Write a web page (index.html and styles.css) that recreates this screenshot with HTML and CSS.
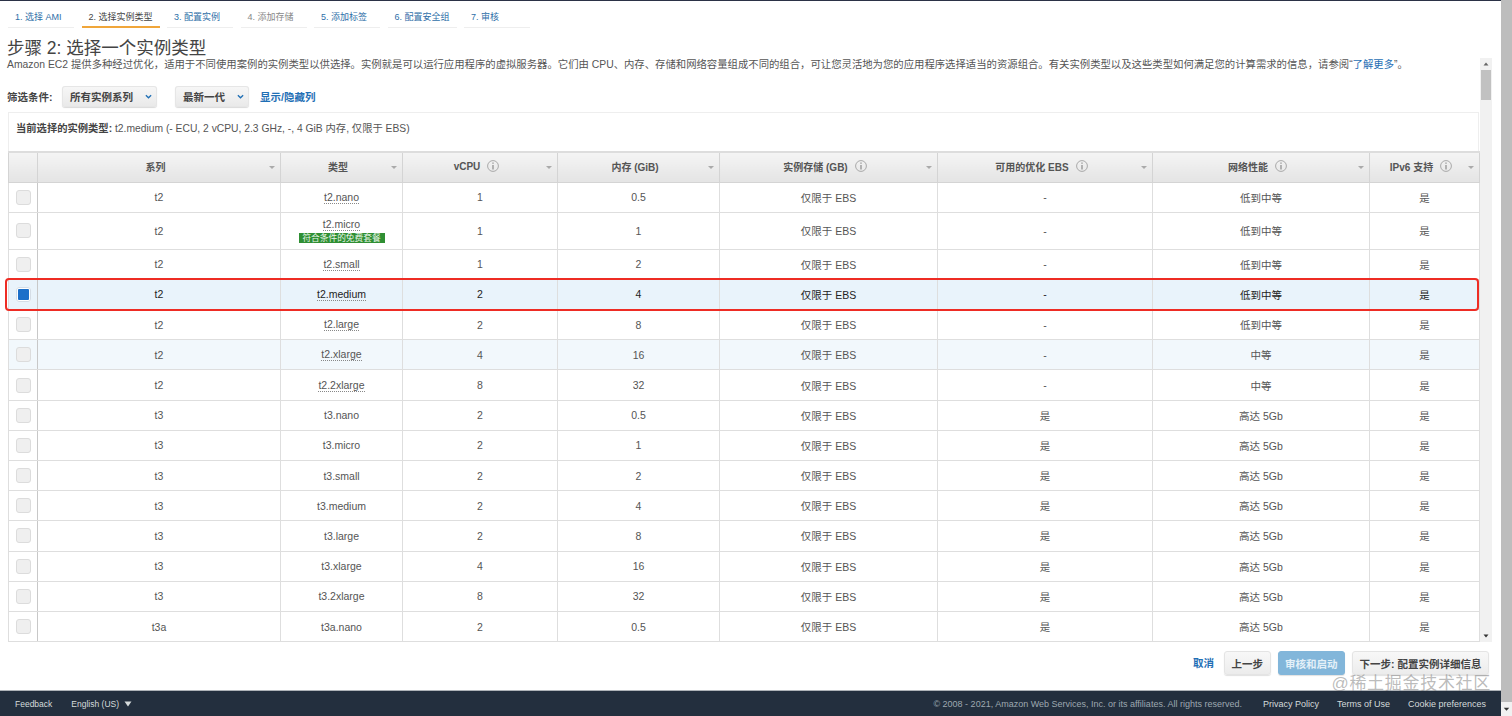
FILE: index.html
```html
<!DOCTYPE html>
<html lang="zh-CN">
<head>
<meta charset="utf-8">
<title>选择实例类型</title>
<link rel="stylesheet" href="styles.css">
</head>
<body>
<svg class="defs" width="0" height="0" aria-hidden="true">
  <symbol id="info" viewBox="0 0 12 12">
    <circle cx="6" cy="6" r="5.4" fill="none" stroke="#a9a9a9" stroke-width="1"/>
    <path d="M6 2.4v1.3M6 5v4.4" fill="none" stroke="#8a8a8a" stroke-width="1.2"/>
  </symbol>
</svg>
<div class="window">
  <div class="topline"></div>
  <nav class="wizard">
    <a class="tab">1. 选择 AMI</a>
    <a class="tab active">2. 选择实例类型</a>
    <a class="tab">3. 配置实例</a>
    <a class="tab muted">4. 添加存储</a>
    <a class="tab">5. 添加标签</a>
    <a class="tab">6. 配置安全组</a>
    <a class="tab">7. 审核</a>
  </nav>
  <h1 class="title">步骤 2: 选择一个实例类型</h1>
  <div class="scroller">
    <div class="scroll-body">
      <p class="desc">Amazon EC2 提供多种经过优化，适用于不同使用案例的实例类型以供选择。实例就是可以运行应用程序的虚拟服务器。它们由 CPU、内存、存储和网络容量组成不同的组合，可让您灵活地为您的应用程序选择适当的资源组合。有关实例类型以及这些类型如何满足您的计算需求的信息，请参阅“<a class="link">了解更多</a>”。</p>
      <div class="filters">
        <span class="filter-label">筛选条件:</span>
        <div class="select sel-family"><span>所有实例系列</span><svg class="chev" viewBox="0 0 8 5"><path d="M1 1l3 3 3-3" fill="none" stroke="#1f6fb5" stroke-width="1.5"/></svg></div>
        <div class="select sel-gen"><span>最新一代</span><svg class="chev" viewBox="0 0 8 5"><path d="M1 1l3 3 3-3" fill="none" stroke="#1f6fb5" stroke-width="1.5"/></svg></div>
        <a class="link toggle">显示/隐藏列</a>
      </div>
      <div class="table-panel">
        <div class="current"><b>当前选择的实例类型:</b> t2.medium (- ECU, 2 vCPU, 2.3 GHz, -, 4 GiB 内存, 仅限于 EBS)</div>
        <table class="types">
          <colgroup>
            <col class="c0"><col class="c1"><col class="c2"><col class="c3"><col class="c4"><col class="c5"><col class="c6"><col class="c7"><col class="c8">
          </colgroup>
          <thead>
            <tr>
              <th></th>
              <th><span class="th-in">系列</span><i class="sort"></i></th>
              <th><span class="th-in">类型</span><i class="sort"></i></th>
              <th><span class="th-in">vCPU<svg class="info"><use href="#info"/></svg></span><i class="sort"></i></th>
              <th><span class="th-in">内存 (GiB)</span><i class="sort"></i></th>
              <th><span class="th-in">实例存储 (GB)<svg class="info"><use href="#info"/></svg></span><i class="sort"></i></th>
              <th><span class="th-in">可用的优化 EBS<svg class="info"><use href="#info"/></svg></span><i class="sort"></i></th>
              <th><span class="th-in">网络性能<svg class="info"><use href="#info"/></svg></span><i class="sort"></i></th>
              <th><span class="th-in">IPv6 支持<svg class="info"><use href="#info"/></svg></span><i class="sort"></i></th>
            </tr>
          </thead>
          <tbody>
            <tr><td><span class="check"></span></td><td>t2</td><td><span class="dotted">t2.nano</span></td><td>1</td><td>0.5</td><td>仅限于 EBS</td><td>-</td><td>低到中等</td><td>是</td></tr>
            <tr class="tall"><td><span class="check"></span></td><td>t2</td><td><span class="dotted">t2.micro</span><span class="badge">符合条件的免费套餐</span></td><td>1</td><td>1</td><td>仅限于 EBS</td><td>-</td><td>低到中等</td><td>是</td></tr>
            <tr><td><span class="check"></span></td><td>t2</td><td><span class="dotted">t2.small</span></td><td>1</td><td>2</td><td>仅限于 EBS</td><td>-</td><td>低到中等</td><td>是</td></tr>
            <tr class="selected"><td><span class="check on"></span></td><td>t2</td><td><span class="dotted">t2.medium</span></td><td>2</td><td>4</td><td>仅限于 EBS</td><td>-</td><td>低到中等</td><td>是</td></tr>
            <tr><td><span class="check"></span></td><td>t2</td><td><span class="dotted">t2.large</span></td><td>2</td><td>8</td><td>仅限于 EBS</td><td>-</td><td>低到中等</td><td>是</td></tr>
            <tr class="hover"><td><span class="check"></span></td><td>t2</td><td><span class="dotted">t2.xlarge</span></td><td>4</td><td>16</td><td>仅限于 EBS</td><td>-</td><td>中等</td><td>是</td></tr>
            <tr><td><span class="check"></span></td><td>t2</td><td><span class="dotted">t2.2xlarge</span></td><td>8</td><td>32</td><td>仅限于 EBS</td><td>-</td><td>中等</td><td>是</td></tr>
            <tr><td><span class="check"></span></td><td>t3</td><td>t3.nano</td><td>2</td><td>0.5</td><td>仅限于 EBS</td><td>是</td><td>高达 5Gb</td><td>是</td></tr>
            <tr><td><span class="check"></span></td><td>t3</td><td>t3.micro</td><td>2</td><td>1</td><td>仅限于 EBS</td><td>是</td><td>高达 5Gb</td><td>是</td></tr>
            <tr><td><span class="check"></span></td><td>t3</td><td>t3.small</td><td>2</td><td>2</td><td>仅限于 EBS</td><td>是</td><td>高达 5Gb</td><td>是</td></tr>
            <tr><td><span class="check"></span></td><td>t3</td><td>t3.medium</td><td>2</td><td>4</td><td>仅限于 EBS</td><td>是</td><td>高达 5Gb</td><td>是</td></tr>
            <tr><td><span class="check"></span></td><td>t3</td><td>t3.large</td><td>2</td><td>8</td><td>仅限于 EBS</td><td>是</td><td>高达 5Gb</td><td>是</td></tr>
            <tr><td><span class="check"></span></td><td>t3</td><td>t3.xlarge</td><td>4</td><td>16</td><td>仅限于 EBS</td><td>是</td><td>高达 5Gb</td><td>是</td></tr>
            <tr><td><span class="check"></span></td><td>t3</td><td>t3.2xlarge</td><td>8</td><td>32</td><td>仅限于 EBS</td><td>是</td><td>高达 5Gb</td><td>是</td></tr>
            <tr><td><span class="check"></span></td><td>t3a</td><td>t3a.nano</td><td>2</td><td>0.5</td><td>仅限于 EBS</td><td>是</td><td>高达 5Gb</td><td>是</td></tr>
          </tbody>
        </table>
        <div class="highlight"></div>
      </div>
    </div>
    <div class="scrollbar inner">
      <svg class="arrow" viewBox="0 0 12 12"><path d="M3.5 7.5h5L6 4.5z" fill="#666"/></svg>
      <div class="thumb"></div>
      <div class="track"></div>
      <svg class="arrow" viewBox="0 0 12 12"><path d="M3.5 4.5h5L6 7.5z" fill="#333"/></svg>
    </div>
  </div>
  <div class="actions">
    <a class="cancel">取消</a>
    <button class="btn">上一步</button>
    <button class="btn primary">审核和启动</button>
    <button class="btn">下一步: 配置实例详细信息</button>
  </div>
  <footer class="footer">
    <a class="foot-link small">Feedback</a>
    <a class="foot-link small lang">English (US)<svg class="tri" viewBox="0 0 8 6"><path d="M0.5 0.5h7L4 5.5z" fill="#d5dbdb"/></svg></a>
    <span class="copyright">© 2008 - 2021, Amazon Web Services, Inc. or its affiliates. All rights reserved.</span>
    <a class="foot-link">Privacy Policy</a>
    <a class="foot-link">Terms of Use</a>
    <a class="foot-link">Cookie preferences</a>
  </footer>
  <div class="watermark">@稀土掘金技术社区</div>
</div>
<div class="scrollbar outer">
  <div class="outer-thumb"></div>
  <svg class="arrow" viewBox="0 0 12 12"><path d="M3 4.5h6L6 8z" fill="#333"/></svg>
</div>
</body>
</html>
```
FILE: styles.css
```css
* { box-sizing: border-box; }
html, body { margin: 0; height: 100%; }
body {
  display: flex;
  height: 716px;
  overflow: hidden;
  background: #fff;
  color: #444;
  font-family: "Liberation Sans", "Noto Sans CJK SC", sans-serif;
  font-size: 10.5px;
}
.defs { position: absolute; }
.window {
  position: relative;
  flex: 1;
  min-width: 0;
  display: flex;
  flex-direction: column;
}
.topline { height: 1px; background: #2b3246; flex: none; }

.wizard { display: flex; flex: none; height: 27px; padding-left: 8px; gap: 7.5px; }
.tab {
  display: flex;
  align-items: center;
  min-width: 66px;
  padding: 5px 7px 1px;
  font-size: 9px;
  color: #2f6fa8;
  border-bottom: 1px solid #eee;
  white-space: nowrap;
}
.tab.active { color: #444; border-bottom: 2px solid #f0a63a; padding-bottom: 0; }
.tab.muted { color: #888; }

.title {
  flex: none;
  margin: 0;
  height: 30px;
  padding: 10px 0 0 7px;
  font-size: 17.5px;
  line-height: 20px;
  font-weight: 400;
  color: #444;
}

.scroller {
  flex: none;
  height: 584px;
  margin-right: 9px;
  display: flex;
}
.scroll-body { flex: 1; min-width: 0; overflow: hidden; }
.desc {
  margin: 0;
  padding: 0 0 0 7px;
  height: 15px;
  line-height: 14px;
  font-size: 10.37px;
  color: #555;
  white-space: nowrap;
}
.link { color: #1f6fb5; }
.filters {
  display: flex;
  align-items: center;
  height: 21px;
  margin-top: 13px;
  padding-left: 7px;
  font-size: 10.5px;
  font-weight: 700;
  color: #444;
}
.filter-label { width: 55px; }
.select {
  display: flex;
  align-items: center;
  justify-content: space-between;
  height: 21px;
  padding: 0 5px 0 8px;
  border-radius: 3px;
  background: linear-gradient(#f7f7f7, #e9e9e9);
  box-shadow: 0 1px 1px rgba(0,0,0,.15), 0 0 0 1px #e6e6e6 inset;
}
.sel-family { width: 95px; }
.sel-gen { width: 74px; margin-left: 18px; }
.chev { width: 7px; height: 5px; }
.toggle { margin-left: 11px; }

.table-panel {
  position: relative;
  margin: 5px 0 0 8px;
  width: 1471px;
  border-top: 1px solid #eee;
}
.current {
  height: 38px;
  padding: 9px 7px 0;
  line-height: 14px;
  font-size: 10.3px;
  color: #555;
  border-right: 1px solid #eee;
  border-left: 1px solid #eee;
}
.current b { color: #444; }

.types {
  width: 1471px;
  table-layout: fixed;
  border-collapse: collapse;
  text-align: center;
  color: #555;
}
.c0 { width: 29px; }
.c1 { width: 243px; }
.c2 { width: 122px; }
.c3 { width: 155px; }
.c4 { width: 162px; }
.c5 { width: 218px; }
.c6 { width: 215px; }
.c7 { width: 217px; }
.c8 { width: 110px; }

.types th {
  position: relative;
  height: 30px;
  padding: 0 7px 2px 0;
  font-size: 10px;
  font-weight: 700;
  color: #555;
  background: linear-gradient(#f4f4f4, #e4e4e4);
  border: 1px solid #d4d4d4;
  border-top: 2px solid #ddd;
}
.types td {
  height: 30.2px;
  padding: 0;
  border: 1px solid #dedede;
}
.types td:first-child { text-align: left; padding-left: 7px; border-right: 1px solid #c8c8c8; }
.types tr.tall td { height: 37px; }
.th-in { display: inline-flex; align-items: center; justify-content: center; }
.info { width: 12px; height: 12px; margin-left: 7px; }
.sort {
  position: absolute;
  right: 5px;
  top: 13px;
  border-left: 3px solid transparent;
  border-right: 3px solid transparent;
  border-top: 3px solid #aaa;
}
.dotted { display: inline-block; border-bottom: 1px dotted #888; line-height: 12px; }
.badge {
  display: block;
  width: 86px;
  margin: 2px auto 0;
  background: #2f8f33;
  color: #e6f5e6;
  font-size: 8.7px;
  line-height: 10px;
  white-space: nowrap;
}
.check {
  display: block;
  width: 15px;
  height: 15px;
  border-radius: 3px;
  background: #efefef;
  border: 1px solid #dcdcdc;
}
.check.on { background: #1c6fc9; border: 2px solid #fff; outline: 1px solid #d5dde6; outline-offset: -1px; }
.selected td { background: #e9f3fb; color: #222; }
.hover td { background: #f2f8fc; }
.highlight {
  position: absolute;
  left: -3px;
  top: 165px;
  width: 1474px;
  height: 33px;
  border: 2px solid #ee2c24;
  border-radius: 4px;
  pointer-events: none;
}

.scrollbar { flex: none; display: flex; flex-direction: column; background: #f1f1f1; }
.scrollbar.inner { width: 12px; }
.arrow { flex: none; width: 12px; height: 12px; }
.thumb { flex: none; height: 30px; margin: 0 1px; background: #c1c1c1; }
.track { flex: 1; }
.scrollbar.outer { width: 11px; background: #bdbdbd; justify-content: space-between; }
.outer-thumb { flex: 1; }
.scrollbar.outer .arrow { width: 11px; height: 14px; background: #f1f1f1; }

.actions {
  flex: none;
  height: 48px;
  display: flex;
  align-items: flex-start;
  justify-content: flex-end;
  gap: 7px;
  padding: 9px 12px 0 0;
}
.cancel { margin-right: 3px; line-height: 24px; color: #1f6fb5; font-weight: 700; font-size: 10.5px; }
.btn {
  height: 24px;
  padding: 0 6.5px;
  border: 1px solid #e4e4e4;
  border-radius: 3px;
  background: linear-gradient(#f8f8f8, #ececec);
  box-shadow: 0 1px 1px rgba(0,0,0,.12);
  font: 700 10.5px "Liberation Sans", "Noto Sans CJK SC", sans-serif;
  color: #444;
}
.btn.primary { background: #82b6da; border-color: #82b6da; color: #e4f0f8; }

.footer {
  flex: 1;
  display: flex;
  align-items: center;
  padding: 0 15px;
  background: #232f3e;
  border-top: 1px solid #aeb3b8;
  font-size: 9px;
  color: #d5dbdb;
  white-space: nowrap;
}
.small { font-size: 8.5px; }
.lang { display: flex; align-items: center; margin-left: 19px; }
.tri { width: 8px; height: 6px; margin-left: 5px; }
.copyright { margin-left: auto; color: #9ea8b0; margin-right: 21px; }
.copyright ~ .foot-link { margin-right: 18px; }
.copyright ~ .foot-link:last-child { margin-right: 0; }
.watermark {
  position: absolute;
  right: 10px;
  bottom: 23px;
  font-size: 17px;
  line-height: 18px;
  color: rgba(130,130,130,.55);
  letter-spacing: .7px;
}
```
